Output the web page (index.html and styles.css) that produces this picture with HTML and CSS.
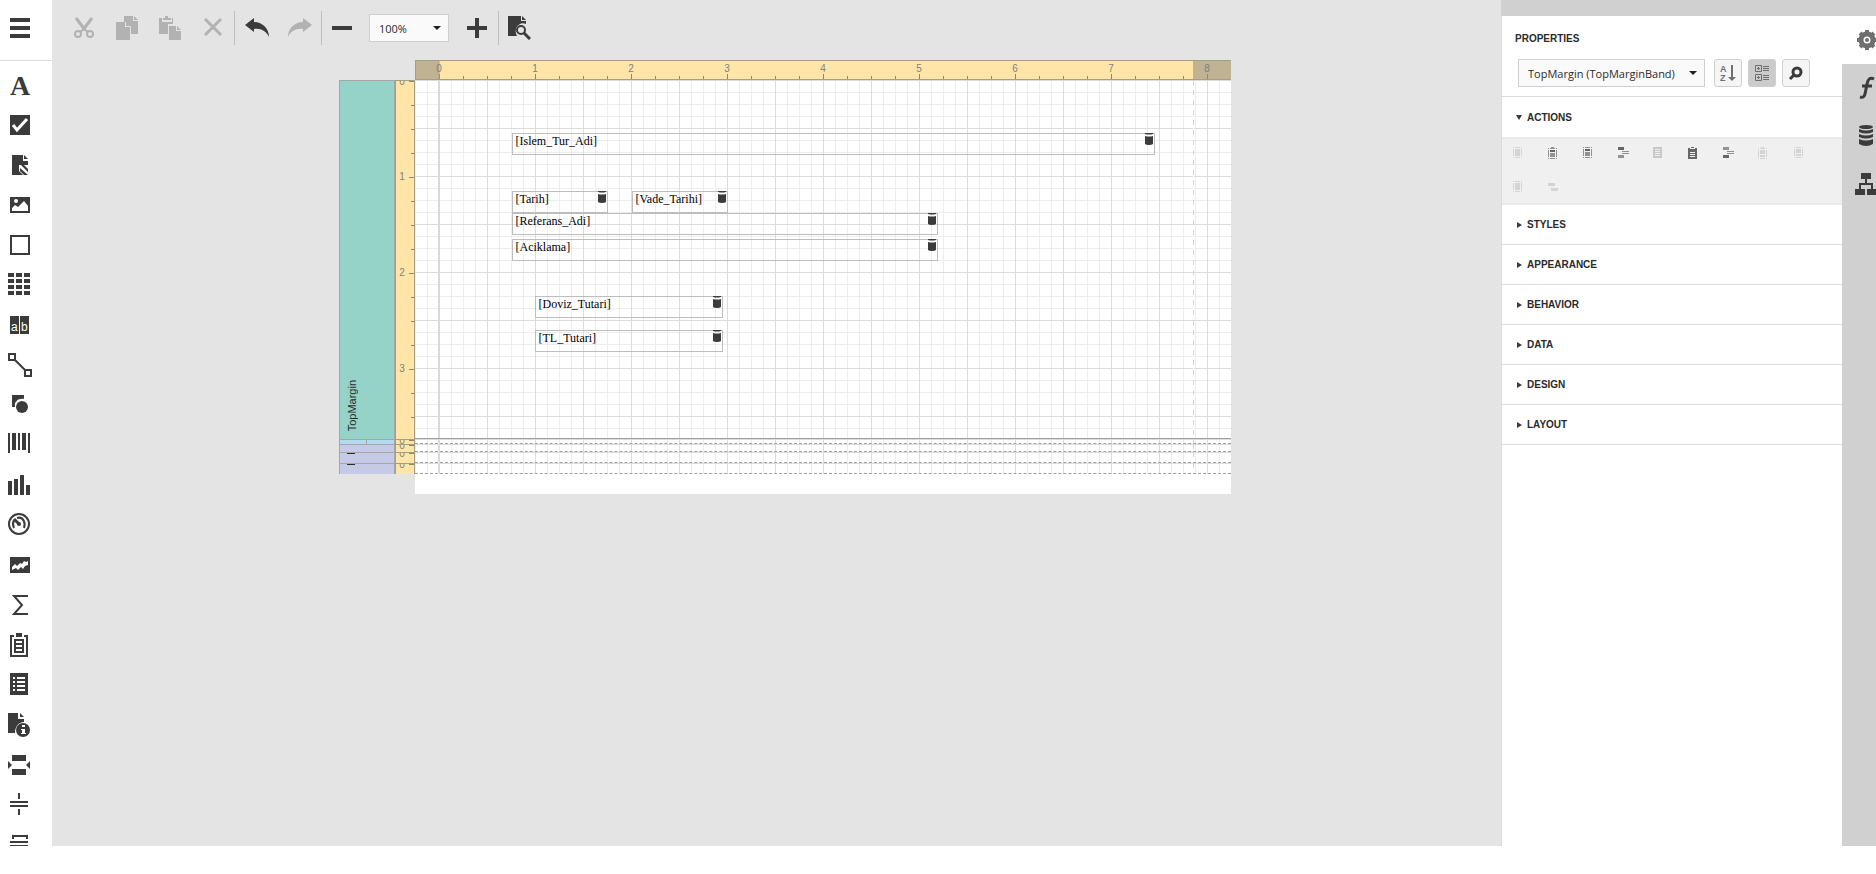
FILE: index.html
```
<!DOCTYPE html>
<html lang="en">
<head>
    <meta charset="UTF-8">
    <meta name="viewport" content="width=device-width, initial-scale=1.0">
    <title>Report Designer</title>
    <link rel="stylesheet" href="styles.css">
</head>
<body>
    <!-- shared shapes -->
    <svg class="defs" width="0" height="0" aria-hidden="true">
        <defs>
            <symbol id="db" viewBox="0 0 8 12">
                <path d="M0 0h8v1q-4 1-8 0zM0 3q4 1 8 0v8q-1 1-4 1t-4-1z"/>
            </symbol>
            <symbol id="band" viewBox="0 0 9 11">
                <path d="M0 0h1v1H0zM2 0h5v1H2zM8 0h1v1H8zM0 2h1v7H0zM8 2h1v7H8zM0 10h1v1H0zM2 10h5v1H2zM8 10h1v1H8z"/>
            </symbol>
        </defs>
    </svg>

    <div class="designer">
        <nav class="toolbox">
            <button class="menu-btn" aria-label="Menu"><svg width="24" height="24" viewBox="0 0 24 24"><path d="M2 2h20v4H2zM2 10h20v4H2zM2 18h20v4H2z"/></svg></button>
            <div class="tools">
                <button aria-label="Label"><svg viewBox="0 0 24 24"><text x="12" y="22" class="glyph-a">A</text></svg></button>
                <button aria-label="Check Box"><svg viewBox="0 0 24 24"><path d="M2 2h20v20H2z"/><path d="M5 12l4 5L19 6" fill="none" stroke="#fff" stroke-width="3"/></svg></button>
                <button aria-label="Rich Text"><svg viewBox="0 0 24 24"><path d="M4 2h11v6h5v4h-9v6l4 4H4zM16 2l4 4h-4zM13 12h3l4 4v3zM12 15l8 7h-4l-4-4z"/></svg></button>
                <button aria-label="Picture Box"><svg viewBox="0 0 24 24"><path d="M2 4h20v16H2z"/><circle cx="8" cy="8" r="2" fill="#fff"/><path d="M4 18v-3l3-3 3 2 6-6 4 5v5z" fill="#fff"/></svg></button>
                <button aria-label="Panel"><svg viewBox="0 0 24 24"><path d="M3 3h18v18H3z" fill="none" stroke="#3b3b3b" stroke-width="2"/></svg></button>
                <button aria-label="Table"><svg viewBox="0 0 24 24"><path d="M3 0v22M11 0v22M19 0v22" stroke="#3b3b3b" stroke-width="6" stroke-dasharray="4 2"/></svg></button>
                <button aria-label="Character Comb"><svg viewBox="0 0 24 24"><path d="M2 3h9v18H2zM12 3h9v18h-9z"/><text x="3" y="18" class="glyph-ab">a</text><text x="13" y="18" class="glyph-ab">b</text></svg></button>
                <button aria-label="Line"><svg viewBox="0 0 24 24"><path d="M1 1h6v6H1zM17 17h6v6h-6zM7 7l10 10" fill="none" stroke="#3b3b3b" stroke-width="2"/></svg></button>
                <button aria-label="Shape"><svg viewBox="0 0 24 24"><path d="M4 2h12v4c-5-1-10 2-9 8H4z"/><circle cx="14" cy="14" r="6"/></svg></button>
                <button aria-label="Bar Code"><svg viewBox="0 0 24 24"><path d="M0 0h2v20H0zM4 0h4v17H4zM10 0h2v17h-2zM14 0h4v17h-4zM20 0h2v20h-2z"/></svg></button>
                <button aria-label="Chart"><svg viewBox="0 0 24 24"><path d="M0 8h4v14H0zM6 6h4v16H6zM12 2h4v20h-4zM18 12h4v10h-4z"/></svg></button>
                <button aria-label="Gauge"><svg viewBox="0 0 24 24"><g fill="none" stroke="#3b3b3b" stroke-width="2"><circle cx="11" cy="11" r="10"/><path d="M6 15c-2-4-1-6 0-8M9 5c6-2 9 5 7 10"/><path d="M6 6l5 5" stroke-width="3"/></g><circle cx="11" cy="11" r="2"/></svg></button>
                <button aria-label="Sparkline"><svg viewBox="0 0 24 24"><path d="M2 4h20v16H2z"/><path d="M4 17v-3l3-3 2 2 3-3 2 1 2-3 2 1 2-1v4l-3 1-2 3-2-2-3 3-2-2z" fill="#fff"/></svg></button>
                <button aria-label="Pivot Grid"><svg viewBox="0 0 24 24"><path d="M20 3H6l8 9-8 9h14" fill="none" stroke="#3b3b3b" stroke-width="2"/></svg></button>
                <button aria-label="Subreport"><svg viewBox="0 0 24 24"><path d="M8 0h6v4H8zM2 2h4v2H4v18h14V4h-2V2h4v22H2z"/><path d="M6 6h10v14H6zm2 2v2h6V8zm0 4v2h6v-2zm0 4v2h6v-2z" fill-rule="evenodd"/></svg></button>
                <button aria-label="Table of Contents"><svg viewBox="0 0 24 24"><path d="M2 0h18v22H2z"/><path d="M5 5h2M9 5h8M5 9h2M9 9h8M5 13h2M9 13h8M5 17h2M9 17h8" stroke="#fff" stroke-width="2"/></svg></button>
                <button aria-label="Page Info"><svg viewBox="0 0 24 24"><path d="M0 0h10v6h6v3c-6 0-9 5-9 11H0zM12 0l4 4h-4z"/><circle cx="15" cy="17" r="7"/><path d="M14 12h3v2h-3zM13 16h4v4h1v1h-5v-1h1v-3h-1z" fill="#fff"/></svg></button>
                <button aria-label="Page Break"><svg viewBox="0 0 24 24"><path d="M4 2h14v6H4zM4 16h14v6H4zM0 8l4 4-4 4zM22 8l-4 4 4 4z"/></svg></button>
                <button aria-label="Cross-Band Line"><svg viewBox="0 0 24 24"><path d="M10 0h2v6h-2zM2 8h18v2H2zM2 12h18v2H2zM10 16h2v6h-2z"/></svg></button>
                <button aria-label="Cross-Band Box"><svg viewBox="0 0 24 24"><path d="M4 2h16v4h-2V4H6v2H4zM2 8h18v2H2zM2 12h18v2H2z"/></svg></button>
            </div>
        </nav>

        <main class="workspace">
            <div class="toolbar">
                <button disabled aria-label="Cut"><svg viewBox="0 0 24 24"><path d="M4 2l9 12M20 2l-9 12" stroke-width="3" class="stroke"/><g fill="none" class="stroke" stroke-width="2"><circle cx="6" cy="18" r="3"/><circle cx="18" cy="18" r="3"/><path d="M8 16l4-3 4 3"/></g></svg></button>
                <button disabled aria-label="Copy"><svg viewBox="0 0 24 24"><path d="M9 0h9v5h5v13h-7v-7l-5-5H9zM19 0l4 4h-4zM1 6h9v5h5v13H1zM11 6l4 4h-4z"/></svg></button>
                <button disabled aria-label="Paste"><svg viewBox="0 0 24 24"><path d="M1 2h3v4h10V2h1v6h-5v10H1zM7 0h3v2h3v2H5V2h2zM11 10h7v5h5v9H11zM19 10l4 4h-4z"/></svg></button>
                <button disabled aria-label="Delete"><svg viewBox="0 0 24 24"><path d="M4 3l16 16M20 3L4 19" class="stroke" stroke-width="3"/></svg></button>
                <span class="sep"></span>
                <button aria-label="Undo"><svg viewBox="0 0 24 24"><path d="M0 9l9-7v4c9 0 15 7 15 15-3-6-8-9-15-8v3z"/></svg></button>
                <button disabled aria-label="Redo"><svg viewBox="0 0 24 24"><path d="M24 9l-9-7v4C6 6 0 13 0 21c3-6 8-9 15-8v3z"/></svg></button>
                <span class="sep"></span>
                <button class="narrow" aria-label="Zoom Out"><svg viewBox="0 0 24 24"><path d="M2 10h20v4H2z"/></svg></button>
                <span class="dropdown zoom">
                    <select aria-label="Zoom"><option>100%</option></select>
                </span>
                <button aria-label="Zoom In"><svg viewBox="0 0 24 24"><path d="M10 2h4v8h8v4h-8v8h-4v-8H2v-4h8z"/></svg></button>
                <span class="sep"></span>
                <button class="narrow" aria-label="Preview"><svg viewBox="0 0 24 24"><path d="M1 0h13v5h5v3c-7-3-13 5-9 12H1zM15 0l4 4h-4z"/><g fill="none" class="stroke"><circle cx="14" cy="14" r="4" stroke-width="2"/><path d="M17 17l6 6" stroke-width="3"/></g></svg></button>
            </div>

            <div class="report">
                <svg class="ruler" width="816" height="20">
                    <defs>
                        <pattern id="ticks" x="24" width="96" height="20" patternUnits="userSpaceOnUse">
                            <path d="M0 14h1v6H0zM24 16h1v4h-1zM48 16h1v4h-1zM72 16h1v4h-1z" fill="#8c8672"/>
                        </pattern>
                    </defs>
                    <rect width="816" height="20" fill="#ffe6a8"/>
                    <rect width="24" height="20" fill="#bfb394"/>
                    <rect x="778" width="38" height="20" fill="#bfb394"/>
                    <rect width="816" height="20" fill="url(#ticks)"/>
                    <path d="M0 .5h816M0 19.5h816M.5 0v20M24 0v20" stroke="#a89d80"/>
                    <g class="numbers">
                        <text x="24" y="12">0</text>
                        <text x="120" y="12">1</text>
                        <text x="216" y="12">2</text>
                        <text x="312" y="12">3</text>
                        <text x="408" y="12">4</text>
                        <text x="504" y="12">5</text>
                        <text x="600" y="12">6</text>
                        <text x="696" y="12">7</text>
                        <text x="792" y="12">8</text>
                    </g>
                </svg>

                <div class="row top-margin">
                    <div class="tab"><span>TopMargin</span></div>
                    <svg class="vruler">
                        <defs>
                            <pattern id="vticks" width="20" height="96" patternUnits="userSpaceOnUse">
                                <path d="M13 0h6v1h-6zM15 24h4v1h-4zM15 48h4v1h-4zM15 72h4v1h-4z" fill="#8c8672"/>
                            </pattern>
                        </defs>
                        <rect width="100%" height="100%" fill="url(#vticks)"/>
                        <g class="numbers">
                            <text x="6" y="4">0</text>
                            <text x="6" y="99">1</text>
                            <text x="6" y="195">2</text>
                            <text x="6" y="291">3</text>
                        </g>
                    </svg>
                    <div class="surface">
                        <div class="field f-islem">[Islem_Tur_Adi]<svg><use href="#db"/></svg></div>
                        <div class="field f-tarih">[Tarih]<svg><use href="#db"/></svg></div>
                        <div class="field f-vade">[Vade_Tarihi]<svg><use href="#db"/></svg></div>
                        <div class="field f-referans">[Referans_Adi]<svg><use href="#db"/></svg></div>
                        <div class="field f-aciklama">[Aciklama]<svg><use href="#db"/></svg></div>
                        <div class="field f-doviz">[Doviz_Tutari]<svg><use href="#db"/></svg></div>
                        <div class="field f-tl">[TL_Tutari]<svg><use href="#db"/></svg></div>
                    </div>
                </div>
                <div class="row detail">
                    <div class="tab"></div>
                    <svg class="vruler"><path d="M13 0h6v1h-6z" fill="#8c8672"/><text class="numbers" x="6" y="4">0</text></svg>
                    <div class="surface"></div>
                </div>
                <div class="row sub">
                    <div class="tab"></div>
                    <svg class="vruler"><path d="M13 0h6v1h-6z" fill="#8c8672"/><text class="numbers" x="6" y="4">0</text></svg>
                    <div class="surface"></div>
                </div>
                <div class="row sub tall">
                    <div class="tab"><i></i></div>
                    <svg class="vruler"><path d="M13 0h6v1h-6z" fill="#8c8672"/><text class="numbers" x="6" y="4">0</text></svg>
                    <div class="surface"></div>
                </div>
                <div class="row sub tall">
                    <div class="tab"><i></i></div>
                    <svg class="vruler"><path d="M13 0h6v1h-6z" fill="#8c8672"/><text class="numbers" x="6" y="4">0</text></svg>
                    <div class="surface"></div>
                </div>
                <div class="page-end"></div>
            </div>
        </main>

        <aside class="side">
            <section class="panel">
                <h2>PROPERTIES</h2>
                <div class="picker">
                    <span class="dropdown object">
                        <select aria-label="Selected element"><option>TopMargin (TopMarginBand)</option></select>
                    </span>
                    <button aria-label="Sort alphabetically"><svg width="16" height="18" viewBox="0 0 16 18"><text x="0" y="8" class="glyph-az">A</text><text x="0" y="17" class="glyph-az">Z</text><path d="M11 1h2v12h3l-4 4-4-4h3z" fill="#6f6f6f"/></svg></button>
                    <button class="active" aria-label="Group by category"><svg width="16" height="18" viewBox="0 0 16 18"><g fill="none" stroke="#6f6f6f"><path d="M1.500 1.500h6v6h-6zM1.500 10.500h6v6h-6zM3 4.500h3M4.500 3v3M3 13.500h3M4.500 12v3M9 2.500h6M9 4.500h6M9 6.500h6M9 11.500h6M9 13.500h6M9 15.500h6"/></g></svg></button>
                    <button aria-label="Search"><svg width="16" height="18" viewBox="0 0 16 18"><circle cx="9" cy="8" r="4" fill="none" stroke="#3b3b3b" stroke-width="3"/><path d="M6 11l-4 4" stroke="#3b3b3b" stroke-width="3"/></svg></button>
                </div>
                <button class="group open">ACTIONS</button>
                <div class="actions">
                    <button class="faint" aria-label="Fit bounds"><svg viewBox="0 0 12 12"><use href="#band" width="9" height="11"/><path d="M2 2h5v7H2z"/></svg></button>
                    <button class="mid" aria-label="Insert top margin"><svg viewBox="0 0 12 12"><use href="#band" y="1" width="9" height="11"/><path d="M3 0h3v2H3zM2 6h5v4H2z"/><path d="M2 3h5v2H2z" fill="#666"/></svg></button>
                    <button class="mid" aria-label="Insert report header"><svg viewBox="0 0 12 12"><use href="#band" width="9" height="11"/><path d="M2 5h5v4H2z"/><path d="M2 2h5v2H2z" fill="#666"/></svg></button>
                    <button class="mid" aria-label="Insert group header"><svg viewBox="0 0 12 12"><path d="M4 4h7v1H4zM4 6h7v1H4zM0 8h6v3H0z"/><path d="M0 0h6v3H0z" fill="#666"/></svg></button>
                    <button class="faint" aria-label="Insert detail"><svg viewBox="0 0 12 12"><path d="M0 0h9v11H0z" fill="#c8c8c8"/><path d="M2 2h5v1H2zM2 4h5v1H2zM2 6h5v1H2zM2 8h5v1H2z" fill="#f0f0f0"/></svg></button>
                    <button class="dark" aria-label="Insert detail report"><svg viewBox="0 0 12 12"><path d="M0 1h2v1h5V1h2v11H0zM3 0h3v1H3z"/><path d="M2 5h5v1H2zM2 7h5v1H2zM2 9h5v1H2z" fill="#f0f0f0"/></svg></button>
                    <button class="mid" aria-label="Insert group footer"><svg viewBox="0 0 12 12"><path d="M4 4h7v1H4zM4 6h7v1H4zM0 0h6v3H0z"/><path d="M0 8h6v3H0z" fill="#666"/></svg></button>
                    <button class="faint" aria-label="Insert report footer"><svg viewBox="0 0 12 12"><use href="#band" y="1" width="9" height="11"/><path d="M3 0h3v2H3zM2 3h5v4H2zM2 8h5v2H2z"/></svg></button>
                    <button class="faint" aria-label="Insert page footer"><svg viewBox="0 0 12 12"><use href="#band" x="1" width="9" height="11"/><path d="M3 2h5v4H3zM3 7h5v2H3z"/></svg></button>
                    <button class="faint" aria-label="Insert bottom margin"><svg viewBox="0 0 12 12"><use href="#band" width="9" height="11"/><path d="M2 2h5v7H2z"/></svg></button>
                    <button class="faint" aria-label="Insert sub-band"><svg viewBox="0 0 12 12"><path d="M0 2h7v3H0zM3 7h7v3H3z"/></svg></button>
                </div>
                <button class="group">STYLES</button>
                <button class="group">APPEARANCE</button>
                <button class="group">BEHAVIOR</button>
                <button class="group">DATA</button>
                <button class="group">DESIGN</button>
                <button class="group">LAYOUT</button>
            </section>
            <nav class="side-tabs">
                <button class="active" aria-label="Properties"><svg viewBox="0 0 24 24"><g fill="none" stroke="#6f6f6f"><circle cx="12" cy="12" r="6" stroke-width="5"/><path d="M12 2v3M12 19v3M2 12h3M19 12h3M5 5l2 2M17 17l2 2M5 19l2-2M17 7l2-2" stroke-width="4"/></g><circle cx="12" cy="12" r="2" fill="#6f6f6f"/></svg></button>
                <button aria-label="Expressions"><svg viewBox="0 0 24 24"><path d="M19 3c-4-2-6 0-7 5l-2 10c-1 3-2 4-5 3M7 10h10" fill="none" stroke="#3b3b3b" stroke-width="3"/></svg></button>
                <button aria-label="Field List"><svg viewBox="0 0 24 24"><ellipse cx="11" cy="3" rx="7" ry="2"/><path d="M4 5q7 3 14 0v3q-7 3-14 0zM4 10q7 3 14 0v3q-7 3-14 0zM4 15q7 3 14 0v5q-7 4-14 0z"/></svg></button>
                <button aria-label="Report Explorer"><svg viewBox="0 0 24 24"><path d="M6 1h10v6H6zM0 17h10v6H0zM12 17h10v6H12z"/><path d="M11 7v5M5 17v-5h12v5" fill="none" stroke="#3b3b3b" stroke-width="2"/></svg></button>
            </nav>
        </aside>
    </div>
</body>
</html>
```
FILE: styles.css
```
* {
    box-sizing: border-box;
}
body {
    margin: 0;
    background: #fff;
    color: #2b2b2b;
    font-family: "Open Sans", "Noto Sans", sans-serif;
    font-size: 12px;
}
button {
    padding: 0;
    border: none;
    background: none;
    font-family: inherit;
    cursor: pointer;
}
svg {
    display: block;
    fill: #3b3b3b;
}
.defs {
    position: absolute;
}
.designer {
    display: flex;
    height: calc(100vh - 28px);
    overflow: hidden;
}

/* toolbox */
.toolbox {
    display: flex;
    flex-direction: column;
    width: 52px;
    overflow: hidden;
}
.menu-btn {
    flex: none;
    height: 61px;
    padding: 0 0 4px 8px;
    border-bottom: 1px solid #dcdcdc;
}
.tools {
    padding-top: 4px;
}
.tools button {
    display: flex;
    align-items: center;
    width: 100%;
    height: 40px;
    padding-left: 8px;
}
.tools svg {
    width: 24px;
    height: 24px;
    overflow: visible;
}
.glyph-a {
    font: bold 28px "Liberation Serif", serif;
    text-anchor: middle;
}
.glyph-ab {
    font: 12px "Liberation Sans", sans-serif;
    fill: #fff;
}

/* workspace */
.workspace {
    flex: 1;
    min-width: 0;
    background: #e4e4e4;
}
.toolbar {
    display: flex;
    align-items: center;
    height: 60px;
    padding: 0 0 4px 10px;
}
.toolbar button {
    display: flex;
    justify-content: center;
    width: 43px;
}
.toolbar .narrow {
    width: 40px;
}
.toolbar svg {
    width: 24px;
    height: 24px;
}
.toolbar .stroke {
    stroke: #3b3b3b;
}
.toolbar button:disabled svg {
    fill: #b2b2b2;
}
.toolbar button:disabled .stroke {
    stroke: #b2b2b2;
}
.toolbar g.stroke {
    fill: none;
}
.sep {
    width: 1px;
    height: 34px;
    background: #bfbfbf;
}
.dropdown {
    position: relative;
}
.dropdown select {
    display: block;
    width: 100%;
    height: 28px;
    padding: 0 9px;
    border: 1px solid #cfcfcf;
    border-radius: 0;
    background: #fafafa;
    color: #2b2b2b;
    font: 11px "Open Sans", "Noto Sans", sans-serif;
    appearance: none;
}
.dropdown::after {
    content: "";
    position: absolute;
    right: 8px;
    top: 12px;
    border: 4px solid transparent;
    border-top-color: #1f1f1f;
    border-bottom: none;
}
.zoom {
    width: 80px;
    margin: 0 6px 0 7px;
}

/* report */
.report {
    position: relative;
    width: 892px;
    margin: 0 auto;
    left: 8px;
}
.ruler {
    margin-left: auto;
}
.numbers {
    font: 10px "Liberation Sans", sans-serif;
    fill: #808080;
    text-anchor: middle;
}
.row {
    display: flex;
    height: 8px;
}
.tab {
    display: flex;
    align-items: flex-end;
    width: 56px;
    border: solid #a6a6a6;
    border-width: 1px 1px 0;
    background: #c5cae6;
}
.vruler {
    width: 20px;
    height: 100%;
    border: solid #a89d80;
    border-width: 1px 1px 0;
    background: #ffe6a8;
    overflow: hidden;
}
.surface {
    position: relative;
    flex: 1;
    border-bottom: 1px dashed #a0a0a0;
    background:
        repeating-linear-gradient(to bottom, transparent 0 5px, #fff 5px 10px) 778px 0 / 1px 100% no-repeat,
        linear-gradient(#d4d4d4, #d4d4d4) 778px 0 / 1px 100% no-repeat,
        linear-gradient(#d9d9d9, #d9d9d9) 23px 0 / 2px 100% no-repeat,
        linear-gradient(#dcdcdc 1px, transparent 1px) 0 0 / 48px 48px,
        linear-gradient(to right, #dcdcdc 1px, transparent 1px) 24px 0 / 48px 48px,
        linear-gradient(#ededed 1px, transparent 1px) 0 0 / 12px 12px,
        linear-gradient(to right, #ededed 1px, transparent 1px) 0 0 / 12px 12px,
        #fff;
}
.top-margin {
    height: 359px;
}
.top-margin .tab {
    padding: 0 0 8px 6px;
    background: #95d3c9;
}
.top-margin .tab span {
    font: 11px "Liberation Sans", sans-serif;
    writing-mode: vertical-rl;
    transform: rotate(180deg);
}
.top-margin .surface {
    border-bottom: 1px solid #a0a0a0;
}
.detail {
    height: 5px;
}
.detail .tab {
    background: linear-gradient(#a6a6a6, #a6a6a6) 26px 0 / 1px 100% no-repeat #b3dbf0;
}
.tall {
    height: 11px;
}
.tall .tab {
    align-items: flex-start;
    padding-left: 7px;
}
.tall .tab i {
    width: 8px;
    height: 1px;
    background: #2b2b2b;
}
.page-end {
    width: 816px;
    height: 20px;
    margin-left: auto;
    background: #fff;
}

/* fields placed on the report surface */
.field {
    position: absolute;
    height: 22px;
    padding-left: 3px;
    border: 1px solid #bdbdbd;
    color: #000;
    font: 12px/15px "Liberation Serif", serif;
}
.field svg {
    position: absolute;
    top: -1px;
    right: 1px;
    width: 8px;
    height: 12px;
}
.f-islem { left: 97px; top: 53px; width: 643px; }
.f-tarih { left: 97px; top: 111px; width: 96px; }
.f-vade { left: 217px; top: 111px; width: 96px; }
.f-referans { left: 97px; top: 133px; width: 426px; }
.f-aciklama { left: 97px; top: 159px; width: 426px; }
.f-doviz { left: 120px; top: 216px; width: 188px; }
.f-tl { left: 120px; top: 250px; width: 188px; }

/* properties */
.side {
    display: flex;
    width: 375px;
    border-top: 16px solid #d0d0d0;
}
.panel {
    flex: 1;
    border-left: 1px solid #dcdcdc;
}
h2 {
    margin: 0;
    padding: 16px 13px 0;
    font: bold 10px/14px "Liberation Sans", sans-serif;
}
.picker {
    display: flex;
    height: 51px;
    padding: 13px 0 0 16px;
    border-bottom: 1px solid #dcdcdc;
}
.object {
    width: 187px;
    margin-right: 9px;
}
.picker button {
    display: flex;
    align-items: center;
    justify-content: center;
    width: 28px;
    height: 28px;
    margin-right: 6px;
    border: 1px solid #cfcfcf;
    border-radius: 3px;
    background: #f5f5f5;
}
.picker .active {
    background: #cbcbcb;
}
.glyph-az {
    font: bold 9px "Liberation Sans", sans-serif;
    fill: #6f6f6f;
}
.group {
    display: flex;
    align-items: center;
    width: 100%;
    height: 40px;
    padding-left: 15px;
    border-bottom: 1px solid #dcdcdc;
    color: #2b2b2b;
    font: bold 10px "Liberation Sans", sans-serif;
}
.group::before {
    content: "";
    margin-right: 5px;
    border: 3px solid transparent;
    border-left: 5px solid #3b3b3b;
    border-right: none;
}
.group.open {
    padding-left: 14px;
    border-bottom: none;
}
.group.open::before {
    border: 3px solid transparent;
    border-top: 5px solid #3b3b3b;
    border-bottom: none;
}
.actions {
    display: flex;
    flex-wrap: wrap;
    align-content: flex-start;
    height: 68px;
    padding-left: 11px;
    border: solid #eaeaea;
    border-width: 2px 0;
    background: #f0f0f0;
}
.actions button {
    width: 35px;
    height: 34px;
    padding-bottom: 7px;
}
.actions svg {
    width: 12px;
    height: 12px;
}
.faint svg {
    fill: #d4d4d4;
}
.mid svg {
    fill: #929292;
}
.dark svg {
    fill: #666;
}
.side-tabs {
    width: 34px;
    background: #d0d0d0;
    overflow: hidden;
}
.side-tabs button {
    display: flex;
    align-items: center;
    width: 100%;
    height: 48px;
    padding-left: 13px;
}
.side-tabs svg {
    flex: none;
    width: 24px;
    height: 24px;
}
.side-tabs .active {
    background: #fff;
}
```
